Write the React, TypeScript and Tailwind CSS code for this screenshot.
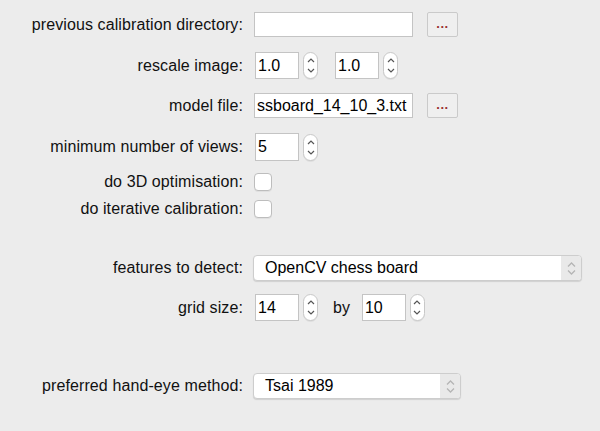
import React from "react";

const font = { fontFamily: '"Liberation Sans", Arial, sans-serif' };

function Label({ children }: { children: React.ReactNode }) {
  return (
    <div className="w-[254px] shrink-0 pr-[11px] text-right text-[16px] leading-none tracking-[0.1px] text-[#111] whitespace-nowrap">
      {children}
    </div>
  );
}

function TextBox({ value, className }: { value?: string; className: string }) {
  return (
    <div
      className={`flex items-center overflow-hidden bg-white border border-[#c4c4c4] pl-[2px] text-[16px] leading-none text-black whitespace-nowrap ${className}`}
    >
      {value}
    </div>
  );
}

function Stepper() {
  return (
    <div className="ml-[4px] flex h-[27px] w-[15px] flex-col items-center justify-between rounded-full border border-[#c8c8c8] bg-white py-[5px] shadow-[0_1px_0_rgba(0,0,0,0.06)]">
      <svg width="8" height="5" viewBox="0 0 8 5" fill="none">
        <path d="M1 4 L4 1 L7 4" stroke="#555" strokeWidth="1.2" />
      </svg>
      <svg width="8" height="5" viewBox="0 0 8 5" fill="none">
        <path d="M1 1 L4 4 L7 1" stroke="#555" strokeWidth="1.2" />
      </svg>
    </div>
  );
}

function DotsButton() {
  return (
    <div className="ml-[14px] flex h-[25px] w-[31px] items-end justify-center rounded-[2px] border border-[#cacaca] bg-[#efefef] pb-[6px]">
      <span className="text-[13px] leading-none font-bold tracking-[0.5px] text-[#9a3030]">...</span>
    </div>
  );
}

function Checkbox() {
  return <div className="h-[18px] w-[18px] rounded-[4px] border border-[#bdbdbd] bg-white shadow-[0_1px_0_rgba(0,0,0,0.05)]" />;
}

function Select({ value, className }: { value: string; className: string }) {
  return (
    <div
      className={`flex h-[26px] items-stretch overflow-hidden rounded-[4px] border border-[#cdcdcd] bg-white shadow-[0_1px_1px_rgba(0,0,0,0.12)] ${className}`}
    >
      <div className="flex flex-1 items-center pl-[11px] text-[16px] leading-none text-black">{value}</div>
      <div className="flex w-[20px] flex-col items-center justify-center gap-[3px] bg-[#e9e9e9]">
        <svg width="9" height="5" viewBox="0 0 9 5" fill="none">
          <path d="M1 4.5 L4.5 1 L8 4.5" stroke="#b5b5b5" strokeWidth="1.3" />
        </svg>
        <svg width="9" height="5" viewBox="0 0 9 5" fill="none">
          <path d="M1 0.5 L4.5 4 L8 0.5" stroke="#b5b5b5" strokeWidth="1.3" />
        </svg>
      </div>
    </div>
  );
}

export default function App() {
  return (
    <div className="h-[431px] w-[600px] bg-[#ececec] pt-[12px]" style={font}>
      {/* calibration directory */}
      <div className="flex h-[25px] items-center">
        <Label>previous calibration directory:</Label>
        <TextBox className="h-[25px] w-[159px]" />
        <DotsButton />
      </div>

      {/* rescale */}
      <div className="mt-[15px] flex h-[27px] items-center">
        <Label>rescale image:</Label>
        <TextBox value="1.0" className="ml-[1px] h-[27px] w-[44px]" />
        <Stepper />
        <TextBox value="1.0" className="ml-[17px] h-[27px] w-[44px]" />
        <Stepper />
      </div>

      {/* model file */}
      <div className="mt-[14px] flex h-[25px] items-center">
        <Label>model file:</Label>
        <TextBox value="ssboard_14_10_3.txt" className="h-[25px] w-[159px]" />
        <DotsButton />
      </div>

      {/* views */}
      <div className="mt-[15px] flex h-[28px] items-center">
        <Label>minimum number of views:</Label>
        <TextBox value="5" className="ml-[1px] h-[28px] w-[44px]" />
        <Stepper />
      </div>

      <div className="mt-[12px] flex h-[18px] items-center">
        <Label>do 3D optimisation:</Label>
        <Checkbox />
      </div>

      <div className="mt-[9px] flex h-[18px] items-center">
        <Label>do iterative calibration:</Label>
        <Checkbox />
      </div>

      {/* detection */}
      <div className="mt-[37px] flex h-[26px] items-center">
        <Label>features to detect:</Label>
        <Select value="OpenCV chess board" className="w-[329px] -ml-[1px]" />
      </div>

      <div className="mt-[13px] flex h-[27px] items-center">
        <Label>grid size:</Label>
        <TextBox value="14" className="ml-[1px] h-[27px] w-[44px]" />
        <Stepper />
        <span className="ml-[15px] mr-[12px] text-[16px] leading-none text-[#111]">by</span>
        <TextBox value="10" className="h-[27px] w-[44px]" />
        <Stepper />
      </div>

      {/* hand-eye */}
      <div className="mt-[52px] flex h-[26px] items-center">
        <Label>preferred hand-eye method:</Label>
        <Select value="Tsai 1989" className="w-[208px] -ml-[1px]" />
      </div>
    </div>
  );
}
